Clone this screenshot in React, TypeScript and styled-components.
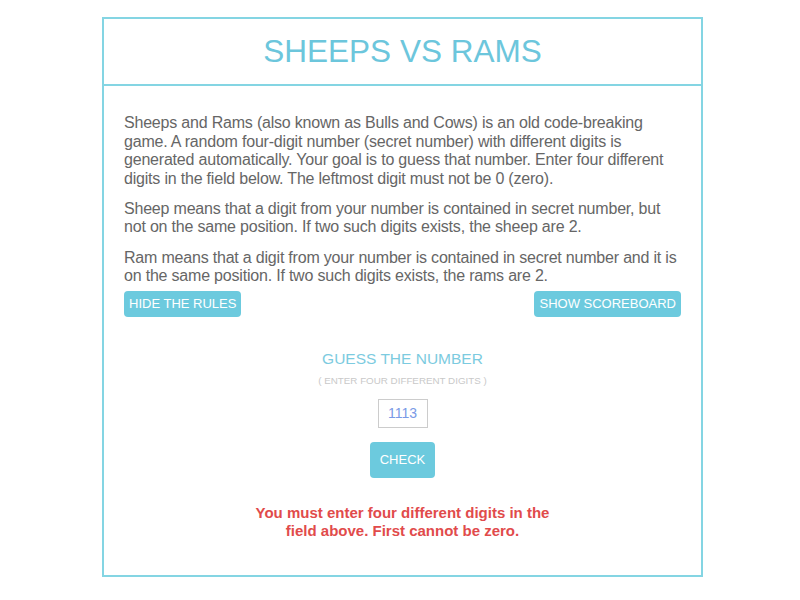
import React from "react";
import styled, { createGlobalStyle } from "styled-components";

const Global = createGlobalStyle`
  html, body { margin: 0; padding: 0; background: #fff; }
  body { font-family: Arial, "Liberation Sans", sans-serif; }
  * { box-sizing: border-box; }
`;

const Card = styled.div`
  width: 601px;
  margin: 17px 0 0 102px;
  border: 2px solid #84d5e3;
  background: #fff;
`;

const Header = styled.header`
  height: 67px;
  border-bottom: 2px solid #84d5e3;
  display: flex;
  align-items: center;
  justify-content: center;
`;

const Title = styled.h1`
  margin: 0;
  font-family: Arial, "Liberation Sans", sans-serif;
  font-weight: normal;
  font-size: 31.5px;
  color: #6cc6dc;
  line-height: 1;
`;

const Body = styled.main`
  padding: 28px 20px 35px;
`;

const Rules = styled.div`
  display: flex;
  flex-direction: column;
  gap: 11.5px;
`;

const P = styled.p`
  margin: 0;
  font-size: 16px;
  line-height: 18.6px;
  letter-spacing: -0.2px;
  color: #666;
`;

const ButtonRow = styled.div`
  display: flex;
  justify-content: space-between;
  margin-top: 5px;
`;

const Button = styled.button<{ $big?: boolean }>`
  border: none;
  border-radius: 4px;
  background: #6ccade;
  color: #fff;
  font-family: Arial, "Liberation Sans", sans-serif;
  font-size: 13px;
  text-transform: uppercase;
  height: ${(p) => (p.$big ? "36px" : "26px")};
  padding: ${(p) => (p.$big ? "0 10px" : "0 5px")};
  cursor: pointer;
`;

const Game = styled.section`
  display: flex;
  flex-direction: column;
  align-items: center;
  margin-top: 33px;
`;

const GuessTitle = styled.h2`
  margin: 0;
  font-weight: normal;
  font-size: 15.5px;
  line-height: 17px;
  color: #7ccbe0;
  text-transform: uppercase;
`;

const Hint = styled.div`
  margin-top: 8px;
  font-size: 9.8px;
  line-height: 12px;
  color: #c9c9c9;
`;

const Input = styled.input`
  margin-top: 12px;
  width: 50px;
  height: 29px;
  border: 1px solid #cccccc;
  text-align: center;
  font-family: Arial, "Liberation Sans", sans-serif;
  font-size: 14px;
  color: #7a9ae6;
  padding: 0;
  outline: none;
`;

const CheckWrap = styled.div`
  margin-top: 14px;
`;

const Error = styled.div`
  margin-top: 26px;
  max-width: 300px;
  text-align: center;
  font-weight: bold;
  font-size: 15px;
  line-height: 18px;
  color: #e14b4b;
`;

export default function App() {
  return (
    <>
      <Global />
      <Card>
        <Header>
          <Title>SHEEPS VS RAMS</Title>
        </Header>
        <Body>
          <Rules>
            <P>
              Sheeps and Rams (also known as Bulls and Cows) is an old code-breaking game. A
              random four-digit number (secret number) with different digits is generated
              automatically. Your goal is to guess that number. Enter four different digits in
              the field below. The leftmost digit must not be 0 (zero).
            </P>
            <P>
              Sheep means that a digit from your number is contained in secret number, but not
              on the same position. If two such digits exists, the sheep are 2.
            </P>
            <P>
              Ram means that a digit from your number is contained in secret number and it is
              on the same position. If two such digits exists, the rams are 2.
            </P>
          </Rules>
          <ButtonRow>
            <Button>Hide the rules</Button>
            <Button>Show scoreboard</Button>
          </ButtonRow>
          <Game>
            <GuessTitle>Guess the number</GuessTitle>
            <Hint>( ENTER FOUR DIFFERENT DIGITS )</Hint>
            <Input defaultValue="1113" />
            <CheckWrap>
              <Button $big>Check</Button>
            </CheckWrap>
            <Error>You must enter four different digits in the field above. First cannot be zero.</Error>
          </Game>
        </Body>
      </Card>
    </>
  );
}
